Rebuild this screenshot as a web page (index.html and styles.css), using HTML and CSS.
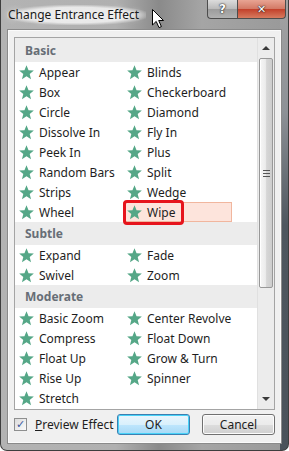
FILE: index.html
```html
<html><head><title>Change Entrance Effect</title><link rel="stylesheet" href="styles.css"></head>
<body>
<svg class="defs" width="0" height="0">
  <symbol id="star" viewBox="0 0 14 14">
    <polygon points="7,0.2 8.9,5.0 13.85,5.18 10.0,8.4 11.23,13.22 7,10.6 2.77,13.22 4.0,8.4 0.15,5.18 5.1,5.0"/>
  </symbol>
</svg>
<div class="window">
  <div class="titlebar">
    <span class="title">Change Entrance Effect</span>
    <div class="caption-buttons">
      <div class="cap help">?</div>
      <div class="cap close">&#x2715;</div>
    </div>
  </div>
  <div class="client">
    <div class="listbox">
      <div class="list">
        <div class="group first">Basic</div>
        <div class="rows">
          <div class="cell"><svg class="star"><use href="#star"/></svg>Appear</div>
          <div class="cell"><svg class="star"><use href="#star"/></svg>Blinds</div>
          <div class="cell"><svg class="star"><use href="#star"/></svg>Box</div>
          <div class="cell"><svg class="star"><use href="#star"/></svg>Checkerboard</div>
          <div class="cell"><svg class="star"><use href="#star"/></svg>Circle</div>
          <div class="cell"><svg class="star"><use href="#star"/></svg>Diamond</div>
          <div class="cell"><svg class="star"><use href="#star"/></svg>Dissolve In</div>
          <div class="cell"><svg class="star"><use href="#star"/></svg>Fly In</div>
          <div class="cell"><svg class="star"><use href="#star"/></svg>Peek In</div>
          <div class="cell"><svg class="star"><use href="#star"/></svg>Plus</div>
          <div class="cell"><svg class="star"><use href="#star"/></svg>Random Bars</div>
          <div class="cell"><svg class="star"><use href="#star"/></svg>Split</div>
          <div class="cell"><svg class="star"><use href="#star"/></svg>Strips</div>
          <div class="cell"><svg class="star"><use href="#star"/></svg>Wedge</div>
          <div class="cell"><svg class="star"><use href="#star"/></svg>Wheel</div>
          <div class="cell selected"><svg class="star"><use href="#star"/></svg>Wipe<span class="mark"></span></div>
        </div>
        <div class="group">Subtle</div>
        <div class="rows">
          <div class="cell"><svg class="star"><use href="#star"/></svg>Expand</div>
          <div class="cell"><svg class="star"><use href="#star"/></svg>Fade</div>
          <div class="cell"><svg class="star"><use href="#star"/></svg>Swivel</div>
          <div class="cell"><svg class="star"><use href="#star"/></svg>Zoom</div>
        </div>
        <div class="group">Moderate</div>
        <div class="rows">
          <div class="cell"><svg class="star"><use href="#star"/></svg>Basic Zoom</div>
          <div class="cell"><svg class="star"><use href="#star"/></svg>Center Revolve</div>
          <div class="cell"><svg class="star"><use href="#star"/></svg>Compress</div>
          <div class="cell"><svg class="star"><use href="#star"/></svg>Float Down</div>
          <div class="cell"><svg class="star"><use href="#star"/></svg>Float Up</div>
          <div class="cell"><svg class="star"><use href="#star"/></svg>Grow &amp; Turn</div>
          <div class="cell"><svg class="star"><use href="#star"/></svg>Rise Up</div>
          <div class="cell"><svg class="star"><use href="#star"/></svg>Spinner</div>
          <div class="cell"><svg class="star"><use href="#star"/></svg>Stretch</div>
        </div>
      </div>
      <div class="scrollbar">
        <div class="arrow up"><span></span></div>
        <div class="thumb"><span class="grip"></span></div>
        <div class="track"></div>
        <div class="arrow down"><span></span></div>
      </div>
    </div>
    <div class="footer">
      <label class="check"><span class="box">&#x2713;</span><span><u>P</u>review Effect</span></label>
      <div class="buttons">
        <div class="btn default">OK</div>
        <div class="btn">Cancel</div>
      </div>
    </div>
  </div>
  <svg class="cursor" width="13" height="20" viewBox="0 0 13 20">
    <path d="M0.5,0.5 L0.5,16 L4.2,12.4 L7,18.6 L9.4,17.6 L6.7,11.5 L11.5,11.5 Z" fill="#fff" stroke="#000" stroke-width="1"/>
  </svg>
</div>
</body></html>
```

FILE: styles.css
```css
* { box-sizing: border-box; }
body { margin: 0; font-family: "Segoe UI", "Noto Sans", sans-serif; font-size: 12px; color: #1e1e1e; }
.defs { position: absolute; }

.window {
  position: relative; width: 289px; height: 451px;
  display: flex; flex-direction: column;
  padding: 0 6px 6px 6px;
  border: 1px solid #3e3e3e; border-top: none; border-radius: 0 0 7px 7px;
  background:
    linear-gradient(to bottom, #a3a3a3 0, #8d9196 25%, #4f575f 50%, #4b535b 100%) right top / 8px 100% no-repeat,
    linear-gradient(to right, #b3b3b3 0, #b0b0b0 40%, #8a8a8a 55%, #a5a5a5 70%, #999 100%);
}

.titlebar { height: 29px; display: flex; align-items: flex-start; margin-right: -4px; }
.title {
  margin-top: 5px; padding: 1px 7px 2px 1px;
  font-size: 12px; color: #1a1a1a;
  background: radial-gradient(ellipse at center, rgba(236,236,236,.95) 55%, rgba(236,236,236,0) 76%);
  text-shadow: 0 0 6px #fff;
}
.caption-buttons { margin-left: auto; display: flex; }
.cap {
  height: 19px; display: flex; align-items: center; justify-content: center;
  color: #fff; font-weight: bold; font-family: "DejaVu Sans", sans-serif;
  text-shadow: 0 0 2px #222, 0 0 1px #000;
  border: 1px solid #4d4d4d; border-top: none;
}
.help {
  width: 30px; font-size: 12px; border-radius: 0 0 0 4px; border-right: none;
  background: linear-gradient(#dcdcdc, #b9b9b9 50%, #9c9c9c 51%, #b1b1b1);
}
.close {
  width: 49px; font-size: 11px; border-radius: 0 0 4px 0;
  background: linear-gradient(#e8a493, #d27864 50%, #c2402a 51%, #d77b5f);
}

.client {
  flex: 1; display: flex; flex-direction: column;
  padding: 7px 6px 0 6px;
  background: #f0f0f0;
  border: 1px solid #8a8a8a;
  box-shadow: inset 0 0 0 1px #fafafa;
}

.listbox { height: 373px; display: flex; border: 1px solid #a4a4a4; background: #fff; }
.list { flex: 1; overflow: hidden; }
.group {
  height: 23px; display: flex; align-items: center;
  padding-left: 10px; background: #ececec;
  font-weight: bold; color: #676e76;
}
.group.first { height: 24px; }
.rows { display: grid; grid-template-columns: 108px 109px; }
.cell {
  position: relative; height: 20px; display: flex; align-items: center; gap: 5px;
  padding-left: 3px; border: 1px solid transparent; white-space: nowrap;
}
.cell.selected { background: #fde4dc; border-color: #f1b69e; }
.star { width: 15px; height: 15px; fill: #55a787; flex: none; }
.mark {
  position: absolute; left: -1px; top: -3px; width: 61px; height: 25px;
  border: 3px solid #e6141c; border-radius: 4px;
}

.scrollbar {
  width: 17px; display: flex; flex-direction: column;
  background: #ececec; border-left: 1px solid #e0e0e0;
}
.arrow { height: 20px; display: flex; align-items: center; justify-content: center; }
.arrow span { width: 0; height: 0; border-left: 4px solid transparent; border-right: 4px solid transparent; }
.up span { border-bottom: 4px solid #3a3a3a; }
.down span { border-top: 4px solid #3a3a3a; }
.thumb {
  height: 230px; margin: 0 1px; display: flex; align-items: center; justify-content: center;
  border: 1px solid #989898; border-radius: 2px;
  background: linear-gradient(to right, #f6f6f6, #ececec 45%, #d6d6d6 55%, #cdcdcd);
  box-shadow: inset 1px 0 0 #fff;
}
.grip { width: 7px; height: 7px; border-top: 1px solid #555; border-bottom: 1px solid #555;
  background: linear-gradient(#555, #555) center / 100% 1px no-repeat; }
.track { flex: 1; }

.footer { display: flex; align-items: center; margin-top: 4px; height: 21px; }
.check { display: flex; align-items: center; gap: 8px; }
.box {
  width: 13px; height: 13px; display: flex; align-items: center; justify-content: center;
  border: 1px solid #8e8f8f; background: linear-gradient(135deg, #dcdcdc, #fbfbfb);
  font-size: 11px; font-weight: bold; color: #3c5aa0; line-height: 1;
  font-family: "DejaVu Sans", sans-serif;
}
.buttons { margin-left: auto; display: flex; gap: 12px; }
.btn {
  width: 73px; height: 21px; display: flex; align-items: center; justify-content: center;
  border: 1px solid #707070; border-radius: 3px;
  background: linear-gradient(#f2f2f2 0, #ebebeb 50%, #dddddd 51%, #cfcfcf 100%);
  box-shadow: inset 0 0 0 1px #fcfcfc;
}
.btn.default {
  border-color: #3c7fb1;
  background: linear-gradient(#eaf6fd 0, #d9f0fc 50%, #bee6fd 51%, #a7d9f5 100%);
  box-shadow: inset 0 0 0 1px #48d2f8;
}

.cursor { position: absolute; left: 151px; top: 9px; }
```
